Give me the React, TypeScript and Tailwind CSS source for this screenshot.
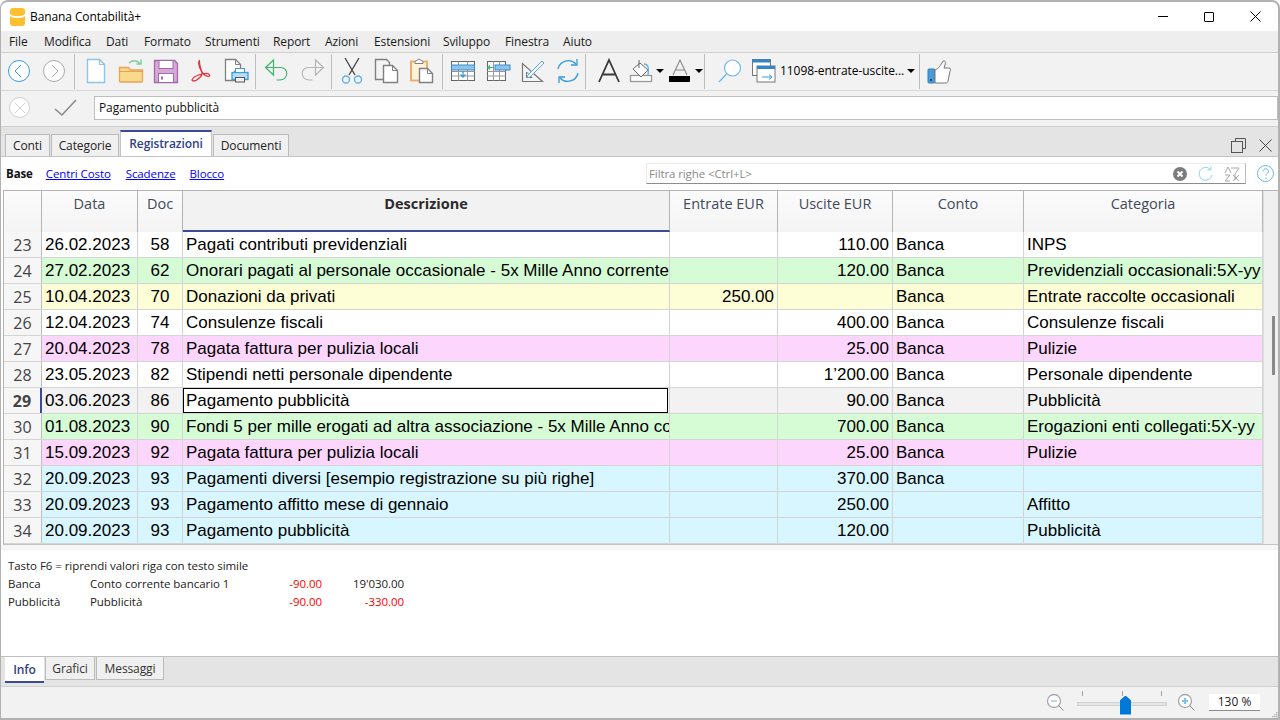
import type { ReactNode } from "react";

const uiFont = "font-['Open_Sans','Noto_Sans',sans-serif]";
const cols = "grid grid-cols-[38px_96px_45px_487px_108px_115px_131px_239px] grid-rows-[25px]";

const rows = [
  { n: 23, date: "26.02.2023", doc: "58", desc: "Pagati contributi previdenziali", inn: "", out: "110.00", conto: "Banca", cat: "INPS", bg: "bg-white" },
  { n: 24, date: "27.02.2023", doc: "62", desc: "Onorari pagati al personale occasionale - 5x Mille Anno corrente", inn: "", out: "120.00", conto: "Banca", cat: "Previdenziali occasionali:5X-yy", bg: "bg-[#d6fcd6]" },
  { n: 25, date: "10.04.2023", doc: "70", desc: "Donazioni da privati", inn: "250.00", out: "", conto: "Banca", cat: "Entrate raccolte occasionali", bg: "bg-[#fdfdd6]" },
  { n: 26, date: "12.04.2023", doc: "74", desc: "Consulenze fiscali", inn: "", out: "400.00", conto: "Banca", cat: "Consulenze fiscali", bg: "bg-white" },
  { n: 27, date: "20.04.2023", doc: "78", desc: "Pagata fattura per pulizia locali", inn: "", out: "25.00", conto: "Banca", cat: "Pulizie", bg: "bg-[#fdd6fd]" },
  { n: 28, date: "23.05.2023", doc: "82", desc: "Stipendi netti personale dipendente", inn: "", out: "1’200.00", conto: "Banca", cat: "Personale dipendente", bg: "bg-white" },
  { n: 29, date: "03.06.2023", doc: "86", desc: "Pagamento pubblicità", inn: "", out: "90.00", conto: "Banca", cat: "Pubblicità", bg: "bg-[#f2f2f2]" },
  { n: 30, date: "01.08.2023", doc: "90", desc: "Fondi 5 per mille erogati ad altra associazione - 5x Mille Anno corrente", inn: "", out: "700.00", conto: "Banca", cat: "Erogazioni enti collegati:5X-yy", bg: "bg-[#d6fcd6]" },
  { n: 31, date: "15.09.2023", doc: "92", desc: "Pagata fattura per pulizia locali", inn: "", out: "25.00", conto: "Banca", cat: "Pulizie", bg: "bg-[#fdd6fd]" },
  { n: 32, date: "20.09.2023", doc: "93", desc: "Pagamenti diversi [esempio registrazione su più righe]", inn: "", out: "370.00", conto: "Banca", cat: "", bg: "bg-[#d7f6ff]" },
  { n: 33, date: "20.09.2023", doc: "93", desc: "Pagamento affitto mese di gennaio", inn: "", out: "250.00", conto: "", cat: "Affitto", bg: "bg-[#d7f6ff]" },
  { n: 34, date: "20.09.2023", doc: "93", desc: "Pagamento pubblicità", inn: "", out: "120.00", conto: "", cat: "Pubblicità", bg: "bg-[#d7f6ff]" },
];

const menus = [
  ["File", "w-[35px]"], ["Modifica", "w-[62px]"], ["Dati", "w-[38px]"], ["Formato", "w-[61px]"], ["Strumenti", "w-[68px]"],
  ["Report", "w-[52px]"], ["Azioni", "w-[49px]"], ["Estensioni", "w-[69px]"], ["Sviluppo", "w-[62px]"], ["Finestra", "w-[58px]"], ["Aiuto", "w-[40px]"],
];

function Sep({ className = "" }: { className?: string }) {
  return <div className={`w-px h-[35px] bg-[#bdbdbd] shrink-0 ${className}`} />;
}

function Btn({ children, className = "w-[35px]" }: { children: ReactNode; className?: string }) {
  return <div className={`h-[36px] flex items-center justify-center shrink-0 ${className}`}>{children}</div>;
}

function Caret({ className = "" }: { className?: string }) {
  return <div className={`w-0 h-0 border-x-[4px] border-x-transparent border-t-[4px] border-t-black shrink-0 ${className}`} />;
}

function Ico({ size = 26, children, view = 26 }: { size?: number; children: ReactNode; view?: number }) {
  return (
    <svg width={size} height={size} viewBox={`0 0 ${view} ${view}`} fill="none" strokeWidth="1">
      {children}
    </svg>
  );
}

function Toolbar() {
  return (
    <div className="h-[39px] pb-px flex items-center bg-[#f2f2f2] border-t border-[#cfcfcf] border-b border-b-[#d8d8d8] shrink-0">
      <Btn>
        <Ico size={24} view={24}>
          <circle cx="12" cy="12" r="10.5" stroke="#3a9bdc" fill="#fff" />
          <path d="M14 6l-6 6 6 6" stroke="#3a9bdc" />
        </Ico>
      </Btn>
      <Btn className="w-[36px]">
        <Ico size={24} view={24}>
          <circle cx="12" cy="12" r="10.5" stroke="#a9a9a9" fill="#fff" />
          <path d="M10 6l6 6-6 6" stroke="#a9a9a9" />
        </Ico>
      </Btn>
      <Sep className="ml-[2px]" />
      <Btn className="w-[35px] ml-[3px]">
        <Ico>
          <path d="M4.5 1.5h12l5 5v18h-17z" fill="#fff" stroke="#8cc4ea" strokeWidth="1.4" />
          <path d="M16.5 1.5v5h5" stroke="#8cc4ea" strokeWidth="1.2" />
        </Ico>
      </Btn>
      <Btn>
        <Ico>
          <path d="M1.5 9.5h9l2 2.500h12v11a1 1 0 0 1-1 1h-21a1 1 0 0 1-1-1z" fill="#f9d98a" stroke="#e9a356" strokeWidth="1.3" />
          <path d="M1.500 13.500h23" stroke="#e9a356" />
          <path d="M11 5c3-3 8-3 11 .5M23 1.500v4.500h-4.500" stroke="#7cd0a0" strokeWidth="1.400" />
        </Ico>
      </Btn>
      <Btn>
        <Ico>
          <path d="M1.500 2.500h20l3 3v19h-23z" fill="#d5a9d5" stroke="#a569ad" strokeWidth="1.300" />
          <rect x="6" y="2.500" width="14" height="8" fill="#fff" stroke="#a569ad" />
          <rect x="5.500" y="15.500" width="15" height="9" fill="#fff" stroke="#a569ad" />
          <rect x="8" y="18.500" width="2" height="3" fill="#a569ad" />
        </Ico>
      </Btn>
      <Btn>
        <Ico>
          <path d="M12 2.500c-2.500 0-1 7 1.500 11s-5 9.500-8 9.500c-3 0-1-4 5-6s10-2 11 0-3 2-6-1-5-13.500-3.500-13.500z" stroke="#e8323a" strokeWidth="1.300" />
        </Ico>
      </Btn>
      <Btn>
        <Ico>
          <path d="M2.500 1.500h10l5 5v7h-6v9h-9z" fill="#fff" stroke="#808080" strokeWidth="1.300" />
          <path d="M12.500 1.500v5h5" stroke="#808080" />
          <rect x="9" y="14.500" width="16" height="7" fill="#b9dcf2" stroke="#3a9bdc" strokeWidth="1.300" />
          <rect x="12.500" y="19.500" width="9" height="4.500" fill="#f2f2f2" stroke="#555" />
          <rect x="12.500" y="10.500" width="9" height="4" fill="#fff" stroke="#3a9bdc" />
        </Ico>
      </Btn>
      <Sep className="ml-[2px]" />
      <Btn className="w-[35px] ml-[3px]">
        <Ico>
          <path d="M9.500 2l-8 7.500 8 7.500zM1.500 9.500h15c8.500 0 8.500 12.500-1 12.500h-3" stroke="#3fb56b" strokeWidth="1.200" />
        </Ico>
      </Btn>
      <Btn>
        <Ico>
          <path d="M16.500 2l8 7.500-8 7.500zM24.500 9.500h-15c-8.500 0-8.500 12.500 1 12.500h3" stroke="#b5b5b5" strokeWidth="1.200" />
        </Ico>
      </Btn>
      <Sep className="ml-[2px]" />
      <Btn className="w-[35px] ml-[2px]">
        <Ico>
          <path d="M6 0l10 17M20 0l-10 17" stroke="#444" strokeWidth="1.300" />
          <circle cx="7" cy="21.500" r="3.500" stroke="#5aaee6" strokeWidth="1.300" />
          <circle cx="19" cy="21.500" r="3.500" stroke="#5aaee6" strokeWidth="1.300" />
        </Ico>
      </Btn>
      <Btn>
        <Ico>
          <path d="M1.500 1.500h11l3 3v17h-14z" fill="#f4f4f4" stroke="#808080" strokeWidth="1.400" />
          <path d="M9.500 7.500h9l5 5v12h-14z" fill="#fff" stroke="#808080" strokeWidth="1.400" />
          <path d="M18.500 7.500v5h5" stroke="#808080" />
        </Ico>
      </Btn>
      <Btn>
        <Ico>
          <rect x="2" y="3.500" width="16" height="19" fill="#fdf3dc" stroke="#efa85c" strokeWidth="1.800" />
          <path d="M6 5.500V3.500l4-2.500 4 2.500v2z" fill="#fff" stroke="#808080" />
          <path d="M10.500 10.500h8l5 5v9h-13z" fill="#fff" stroke="#808080" strokeWidth="1.400" />
          <path d="M18.500 10.500v5h5" stroke="#808080" />
        </Ico>
      </Btn>
      <Sep className="ml-[3px]" />
      <Btn className="w-[35px] ml-[2px]">
        <Ico>
          <rect x="1.500" y="3.500" width="23" height="19" fill="#fff" stroke="#666" />
          <path d="M1.500 13.500h23M1.500 18h23M8.500 3.500v19M17.500 3.500v19" stroke="#999" />
          <rect x="1.500" y="7" width="23" height="5" fill="#8fc3ea" stroke="#3a8cc8" />
          <path d="M13 13v6M10.500 16.500l2.500 2.500 2.500-2.500" stroke="#3a9bdc" strokeWidth="1.300" />
        </Ico>
      </Btn>
      <Btn>
        <Ico>
          <rect x="2.500" y="3.500" width="18" height="19" fill="#fff" stroke="#666" />
          <path d="M2.500 13.500h18M2.500 18h18M8.500 3.500v19M14.500 3.500v19" stroke="#999" />
          <rect x="10" y="7" width="15" height="5" fill="#8fc3ea" stroke="#3a8cc8" />
          <path d="M9 9.500h-6M5 7.500l-2 2 2 2" stroke="#3fb56b" strokeWidth="1.200" />
        </Ico>
      </Btn>
      <Btn>
        <Ico>
          <path d="M2.500 5.500v18h20z" fill="#f4f4f4" stroke="#777" strokeWidth="1.200" />
          <path d="M6.500 14v5.500h5.500z" stroke="#777" />
          <path d="M8 17L22 3l2 2-14 14-3 1z" fill="#fff" stroke="#5aaee6" />
        </Ico>
      </Btn>
      <Btn>
        <Ico>
          <path d="M3 11A10.500 10.500 0 0 1 21 6M23 15A10.500 10.500 0 0 1 5 20" stroke="#2f9bdc" strokeWidth="1.300" />
          <path d="M22 1v6h-6M4 25v-6h6" stroke="#2f9bdc" strokeWidth="1.300" />
        </Ico>
      </Btn>
      <Sep />
      <Btn className="w-[35px] ml-[5px]">
        <Ico>
          <path d="M3 24L13 2l10 22M6.500 16.500h13" stroke="#3a3a3a" strokeWidth="1.800" />
        </Ico>
      </Btn>
      <Btn className="w-[41px] gap-[3px]">
        <Ico size={24} view={24}>
          <rect x="1.500" y="16.500" width="21" height="6" fill="#fff" stroke="#999" strokeWidth="1.300" />
          <path d="M4 10l7-6 8 7-7 7z" fill="#fff" stroke="#666" />
          <path d="M10 1v8" stroke="#666" />
          <path d="M15 5c4 0 5 3 4 11" stroke="#5aaee6" strokeWidth="1.300" />
        </Ico>
        <Caret />
      </Btn>
      <Btn className="w-[36px] gap-[3px]">
        <Ico size={24} view={24}>
          <path d="M5 16L12 1l7 15M8 11h8" stroke="#888" strokeWidth="1.100" />
          <rect x="1" y="17" width="21" height="6" fill="#000" />
        </Ico>
        <Caret />
      </Btn>
      <Sep className="ml-px" />
      <Btn className="w-[35px] ml-[7px]">
        <Ico>
          <circle cx="15.500" cy="10" r="8" stroke="#6ab8ea" strokeWidth="1.200" fill="#fff" />
          <path d="M9.500 16L2 24" stroke="#6ab8ea" strokeWidth="1.200" />
        </Ico>
      </Btn>
      <div className="flex items-center w-[171px] shrink-0 h-[36px]">
        <div className="ml-[4px] shrink-0">
          <Ico>
            <rect x="1.500" y="1.500" width="18" height="16" fill="#fff" stroke="#777" />
            <rect x="1.500" y="1.500" width="18" height="3" fill="#2f86c8" />
            <rect x="6" y="8" width="18" height="16" fill="#fff" stroke="#777" />
            <rect x="6" y="8" width="18" height="3" fill="#2f86c8" />
            <path d="M11 19h10M18 16.500l3 2.500-3 2.500" stroke="#3a9bdc" />
          </Ico>
        </div>
        <span className={`ml-[3px] w-[127px] text-[12px] tracking-[-0.05px] text-black whitespace-nowrap ${uiFont}`}>11098-entrate-uscite...</span>
        <Caret />
      </div>
      <Sep className="ml-px" />
      <Btn className="w-[38px]">
        <Ico>
          <rect x="2" y="11" width="7" height="14" rx="1" fill="#4d9bd5" stroke="#2f7fbd" />
          <rect x="4" y="21" width="2" height="2" fill="#1d4c70" />
          <path d="M9 12c3-1 6-5 8-9 2-1 3 1 2 4l-1 3h5c2 0 2 2 1 3l-2 10c0 1-1 2-2 2H9z" fill="#fff" stroke="#777" />
        </Ico>
      </Btn>
    </div>
  );
}

function Tab({ label, active, className }: { label: string; active?: boolean; className: string }) {
  return active ? (
    <div className={`h-[26px] bg-white border-t-2 border-[#3c4a96] border-x border-x-[#c4c4c4] flex items-center justify-center text-[12px] tracking-[-0.1px] font-semibold text-[#2f3f8f] ${uiFont} ${className}`}>
      {label}
    </div>
  ) : (
    <div className={`h-[22px] bg-[#f0f0f0] border border-b-0 border-[#bbbbbb] flex items-center justify-center text-[12px] tracking-[-0.1px] text-[#222] ${uiFont} ${className}`}>
      {label}
    </div>
  );
}

function TableHead() {
  const cell = "border-r border-[#b4b4b4] flex justify-center pt-[2px] text-[14.500px] text-[#3f4a5c] bg-gradient-to-b from-[#fbfbfb] to-[#f4f4f4]";
  return (
    <div className={`grid grid-cols-[38px_96px_45px_487px_108px_115px_131px_239px] h-[41px] border-b border-[#c0c0c0] ${uiFont}`}>
      <div className={cell} />
      <div className={cell}>Data</div>
      <div className={cell}>Doc</div>
      <div className="border-r border-[#b4b4b4] border-b-2 border-b-[#3c4a96] flex justify-center pt-[2px] text-[14.500px] font-bold text-[#2b2b2b] bg-[#f2f2f2] h-[41px]">Descrizione</div>
      <div className={cell}>Entrate EUR</div>
      <div className={cell}>Uscite EUR</div>
      <div className={cell}>Conto</div>
      <div className={cell}>Categoria</div>
    </div>
  );
}

function TableRow({ r }: { r: (typeof rows)[number] }) {
  const sel = r.n === 29;
  const cell = "border-r border-[#d4d4d4] px-[3px] whitespace-nowrap overflow-hidden flex items-center";
  return (
    <div className={`${cols} h-[26px] border-b border-[#d4d4d4] text-[17px] text-black font-['Liberation_Sans',Arial,sans-serif] ${r.bg}`}>
      <div className={`border-r bg-[#f6f6f6] flex items-center justify-center text-[16px] text-[#444] ${uiFont} ${sel ? "font-bold border-r-2 border-[#3c4a96]" : "border-[#bdbdbd]"}`}>{r.n}</div>
      <div className={cell}>{r.date}</div>
      <div className={`${cell} justify-center`}>{r.doc}</div>
      {sel ? (
        <div className="border-r border-[#d4d4d4]">
          <div className="h-full w-[485px] bg-white border border-black px-[2px] flex items-center whitespace-nowrap">{r.desc}</div>
        </div>
      ) : (
        <div className="border-r border-[#d4d4d4] pl-[3px] whitespace-nowrap overflow-hidden flex items-center">{r.desc}</div>
      )}
      <div className={`${cell} justify-end`}>{r.inn}</div>
      <div className={`${cell} justify-end`}>{r.out}</div>
      <div className={cell}>{r.conto}</div>
      <div className={cell}>{r.cat}</div>
    </div>
  );
}

export default function App() {
  return (
    <div className="w-[1280px] h-[720px] flex flex-col overflow-hidden bg-white border-t-2 border-b-2 border-l border-r-2 border-[#b2b2b2] rounded-t-[8px] font-['Open_Sans',sans-serif]">
      {/* title bar */}
      <div className="h-[29px] flex items-center shrink-0">
        <svg className="ml-[9px]" width="15" height="18" viewBox="0 0 15 18">
          <path d="M0 3a3 3 0 0 1 3-3h9a3 3 0 0 1 3 3v12a3 3 0 0 1-3 3H3a3 3 0 0 1-3-3z" fill="#fdbf2d" />
          <path d="M0 6c3 3 12 3 15 0v2c-3 3-12 3-15 0z" fill="#fff" />
        </svg>
        <span className="ml-[5px] text-[12px] tracking-[-0.1px] text-black">Banana Contabilità+</span>
        <div className="ml-auto flex items-center">
          <div className="w-[46px] flex justify-center"><div className="w-[10px] h-px bg-black" /></div>
          <div className="w-[46px] flex justify-center"><div className="w-[10px] h-[10px] border border-black rounded-[1px]" /></div>
          <div className="w-[46px] flex justify-center">
            <svg width="11" height="11" viewBox="0 0 11 11"><path d="M.5.5l10 10M10.500.5l-10 10" stroke="#000" /></svg>
          </div>
        </div>
      </div>

      {/* menu */}
      <div className="h-[21px] bg-[#eeeeee] flex items-center pl-[8px] text-[12px] tracking-[-0.1px] text-[#1a1a1a] shrink-0">
        {menus.map(([m, w]) => (
          <span key={m} className={`${w} whitespace-nowrap`}>{m}</span>
        ))}
      </div>

      <Toolbar />

      {/* edit line */}
      <div className="h-[36px] pb-[2px] bg-[#f2f2f2] border-b border-[#cfcfcf] flex items-center shrink-0">
        <div className="ml-[8px] w-[21px] h-[21px] rounded-full bg-white border border-[#cfcfcf] flex items-center justify-center shrink-0">
          <svg width="12" height="12" viewBox="0 0 12 12"><path d="M1 1l10 10M11 1L1 11" stroke="#d0d0d0" /></svg>
        </div>
        <svg className="ml-[24px] shrink-0" width="24" height="18" viewBox="0 0 24 18"><path d="M1 10l7 6L22 1" stroke="#8a8a8a" strokeWidth="1.600" fill="none" /></svg>
        <div className="ml-[16px] w-[1185px] h-[24px] pt-px bg-white border border-[#bdbdbd] flex items-center pl-[4px] text-[12px] tracking-[-0.1px] text-[#111]">Pagamento pubblicità</div>
      </div>

      {/* document tabs */}
      <div className="h-[30px] bg-[#e4e4e4] border-b border-[#c4c4c4] flex items-end pl-[4px] gap-px shrink-0">
        <Tab label="Conti" className="w-[45px]" />
        <Tab label="Categorie" className="w-[68px]" />
        <Tab label="Registrazioni" active className="w-[92px]" />
        <Tab label="Documenti" className="w-[76px]" />
        <div className="ml-auto mr-[6px] mb-[3px] flex items-center gap-[13px]">
          <svg width="15" height="15" viewBox="0 0 15 15" fill="none"><path d="M4.500 3.500v-3h10v10h-3" stroke="#555" /><rect x=".5" y="3.500" width="11" height="11" stroke="#555" /></svg>
          <svg width="13" height="13" viewBox="0 0 13 13"><path d="M.5.5l12 12M12.500.5l-12 12" stroke="#444" /></svg>
        </div>
      </div>

      {/* view selector and filter */}
      <div className="h-[33px] flex items-center shrink-0 text-[11.500px] tracking-[-0.1px]">
        <span className="ml-[5px] font-bold text-[#111]">Base</span>
        <a className="ml-[13px] text-[#0000ff] underline">Centri Costo</a>
        <a className="ml-[15px] text-[#0000ff] underline">Scadenze</a>
        <a className="ml-[14px] text-[#0000ff] underline">Blocco</a>
        <div className="ml-auto mr-[32px] w-[600px] h-[21px] border border-[#ececec] border-b-[#8c8c8c] border-r-[#bbb] flex items-center pl-[2px]">
          <span className="text-[#8a8a8a]">Filtra righe &lt;Ctrl+L&gt;</span>
          <div className="ml-auto flex items-center mr-[4px]">
            <svg width="14" height="14" viewBox="0 0 14 14"><circle cx="7" cy="7" r="7" fill="#7c7c7c" /><path d="M4.500 4.500l5 5M9.500 4.500l-5 5" stroke="#fff" strokeWidth="1.800" /></svg>
            <svg className="ml-[11px]" width="16" height="16" viewBox="0 0 16 16" fill="none"><path d="M14 9a6.500 6.500 0 1 1-2-6M13 .5v3.500h-3.500" stroke="#8cd5ea" /></svg>
            <svg className="ml-[9px]" width="18" height="16" viewBox="0 0 18 16" fill="none"><path d="M5 1l-3 6M5 1l3 6M2 9h5l-5 6h5M8 2h8l-4 6v6M10 9l6 6M16 9l-6 6" stroke="#a8a8a8" /></svg>
          </div>
        </div>
        <svg className="absolute left-[1257px]" width="17" height="17" viewBox="0 0 17 17" fill="none"><circle cx="8.500" cy="8.500" r="8" stroke="#6ab4e8" /><path d="M6 6.500c0-3.500 5.500-3.500 5.500 0 0 2-2.500 2-2.500 4M9 12.500v1.500" stroke="#6ab4e8" /></svg>
      </div>

      {/* grid */}
      <div className="h-[355px] ml-[2px] flex border-t border-[#b4b4b4] border-b border-b-[#c4c4c4] border-l border-l-[#b4b4b4] shrink-0 overflow-hidden">
        <div className="w-[1259px] shrink-0">
          <TableHead />
          {rows.map((r) => (
            <TableRow key={r.n} r={r} />
          ))}
        </div>
        <div className="flex-1 bg-[#f0f0f0] border-l border-[#dddddd] relative">
          <div className="absolute left-[8px] top-[125px] w-[3px] h-[59px] bg-[#8a8a8a]" />
        </div>
      </div>

      {/* splitter */}
      <div className="h-[5px] bg-[#f6f6f6] shrink-0" />

      {/* info panel */}
      <div className="h-[106px] pl-[7px] pt-[7px] text-[11.500px] tracking-[-0.05px] leading-[18px] shrink-0 text-[#222]">
        <div>Tasto F6 = riprendi valori riga con testo simile</div>
        <div className="grid grid-cols-[82px_170px_62px_82px]">
          <span>Banca</span><span>Conto corrente bancario 1</span><span className="text-right text-[#ff0000]">-90.00</span><span className="text-right">19'030.00</span>
          <span>Pubblicità</span><span>Pubblicità</span><span className="text-right text-[#ff0000]">-90.00</span><span className="text-right text-[#ff0000]">-330.00</span>
        </div>
      </div>

      {/* bottom tabs */}
      <div className="h-[31px] bg-[#e4e4e4] border-t border-[#c0c0c0] border-b border-b-[#cfcfcf] flex items-start pl-[4px] gap-px shrink-0 text-[12px] tracking-[-0.1px]">
        <div className="w-[39px] h-[26px] pt-px bg-white border-b-2 border-[#3c4a96] flex items-center justify-center font-semibold text-[#2f3f8f]">Info</div>
        <div className="w-[50px] h-[23px] pt-px bg-[#f0f0f0] border border-t-0 border-[#bbbbbb] flex items-center justify-center text-[#333]">Grafici</div>
        <div className="w-[68px] h-[23px] pt-px bg-[#f0f0f0] border border-t-0 border-[#bbbbbb] flex items-center justify-center text-[#333]">Messaggi</div>
      </div>

      {/* status bar */}
      <div className="flex-1 bg-[#f2f2f2] flex items-center relative">
        <div className="ml-auto flex items-center mr-[18px]">
          <svg width="19" height="19" viewBox="0 0 19 19" fill="none"><circle cx="8" cy="8" r="6.500" stroke="#a8a8a8" fill="#fff" strokeWidth="1.300" /><path d="M5 8h6" stroke="#b6dcf2" strokeWidth="2" /><path d="M12.500 12.500l5 5" stroke="#888" /></svg>
          <div className="ml-[12px] w-[90px] h-[24px] relative">
            <div className="absolute left-[5px] top-0 w-px h-[5px] bg-[#a0a0a0]" />
            <div className="absolute left-[45px] top-0 w-px h-[5px] bg-[#a0a0a0]" />
            <div className="absolute left-[84px] top-0 w-px h-[5px] bg-[#a0a0a0]" />
            <div className="absolute left-0 right-0 top-[11px] h-[4px] bg-[#e3e5e5] border border-[#d2d2d2]" />
            <div className="absolute left-[43px] top-[5px] w-[11px] h-[19px] bg-[#0078d7] [clip-path:polygon(50%_0,100%_25%,100%_100%,0_100%,0_25%)]" />
          </div>
          <svg className="ml-[10px]" width="19" height="19" viewBox="0 0 19 19" fill="none"><circle cx="8" cy="8" r="6.500" stroke="#a8a8a8" fill="#fff" strokeWidth="1.300" /><path d="M5 8h6M8 5v6" stroke="#7fc2ea" strokeWidth="2" /><path d="M12.500 12.500l5 5" stroke="#888" /></svg>
          <div className="ml-[13px] w-[51px] h-[17px] bg-white border-b border-[#8c8c8c] flex items-center justify-center text-[12px] text-[#222]">130 %</div>
        </div>
        <svg className="absolute right-0 bottom-0" width="7" height="7" viewBox="0 0 7 7" fill="#b8b8b8">
          <rect x="5" y="1" width="1.500" height="1.500" /><rect x="3" y="3" width="1.500" height="1.500" /><rect x="5" y="3" width="1.500" height="1.500" /><rect x="1" y="5" width="1.500" height="1.500" /><rect x="3" y="5" width="1.500" height="1.500" /><rect x="5" y="5" width="1.500" height="1.500" />
        </svg>
      </div>
    </div>
  );
}
